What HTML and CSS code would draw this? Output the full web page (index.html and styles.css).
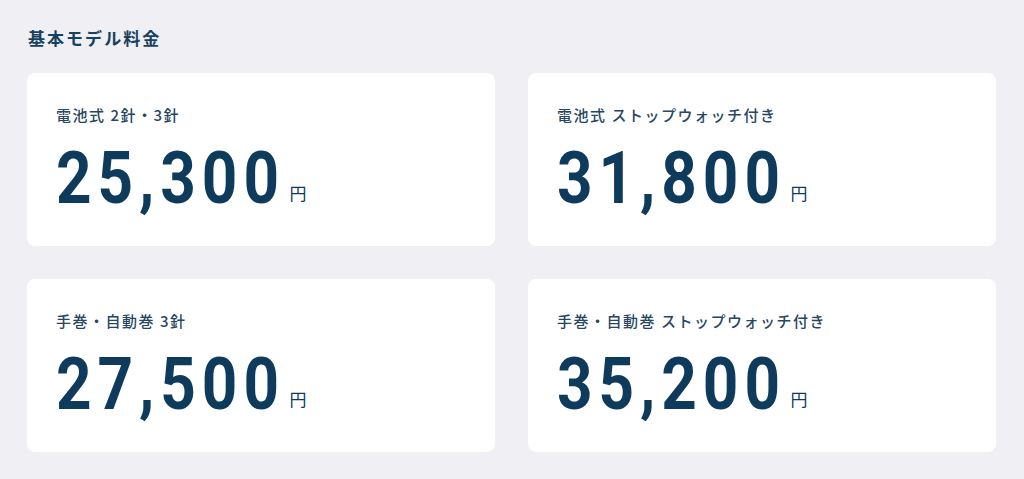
FILE: index.html
```html
<!DOCTYPE html>
<html lang="ja">
<head>
  <meta charset="UTF-8">
  <title>基本モデル料金</title>
  <link rel="stylesheet" href="styles.css">
</head>
<body>
  <div class="price-section">
    <h2 class="section-title">基本モデル料金</h2>
    <div class="price-grid">
      <div class="price-card">
        <div class="price-label">電池式 2針・3針</div>
        <div class="price-value"><span class="price-num">25,300</span><span class="price-unit">円</span></div>
      </div>
      <div class="price-card">
        <div class="price-label">電池式 ストップウォッチ付き</div>
        <div class="price-value"><span class="price-num">31,800</span><span class="price-unit">円</span></div>
      </div>
      <div class="price-card">
        <div class="price-label">手巻・自動巻 3針</div>
        <div class="price-value"><span class="price-num">27,500</span><span class="price-unit">円</span></div>
      </div>
      <div class="price-card">
        <div class="price-label">手巻・自動巻 ストップウォッチ付き</div>
        <div class="price-value"><span class="price-num">35,200</span><span class="price-unit">円</span></div>
      </div>
    </div>
  </div>
</body>
</html>
```

FILE: styles.css
```css
body {
  margin: 0;
  padding: 0;
  background: #efeff4;
  font-family: 'Noto Sans CJK JP', 'Noto Sans', sans-serif;
  color: #123f60;
}
.price-section {
  padding: 25px 28px 27px 27px;
}
.section-title {
  margin: 0 0 22px 1px;
  font-size: 17px;
  line-height: 26px;
  font-weight: 700;
  letter-spacing: 0.12em;
  color: #17425f;
}
.price-grid {
  display: grid;
  grid-template-columns: 1fr 1fr;
  gap: 33px;
}
.price-card {
  background: #fff;
  border-radius: 8px;
  padding: 31px 29px 33px 29px;
  height: 173px;
  box-sizing: border-box;
}
.price-label {
  font-size: 15px;
  line-height: 22px;
  font-weight: 500;
  letter-spacing: 0.1em;
  color: #27465f;
}
.price-value {
  display: flex;
  align-items: flex-end;
  margin-top: 16px;
}
/* Roboto has no condensed cut here, so squeeze it */
.price-num {
  display: inline-block;
  font-family: Roboto, 'Liberation Sans', sans-serif;
  font-weight: 700;
  font-size: 73px;
  line-height: 1;
  letter-spacing: 7px;
  color: #0e3a5c;
  transform: scaleX(0.85);
  transform-origin: left center;
  margin-right: -39px;
}
.price-unit {
  font-size: 17px;
  line-height: 1;
  margin: 0 0 14px 3px;
  color: #0e3a5c;
}
```
